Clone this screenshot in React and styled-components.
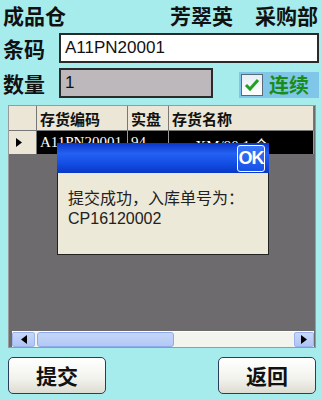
import React from 'react';
import styled, { createGlobalStyle } from 'styled-components';

const Global = createGlobalStyle`
  html, body { margin: 0; padding: 0; }
  body {
    background: #a6ecec;
    font-family: "Noto Sans CJK SC", "Liberation Sans", sans-serif;
  }
`;

const Screen = styled.div`
  position: relative;
  width: 322px;
  height: 400px;
  background: #a6ecec;
  overflow: hidden;
  display: flex;
  flex-direction: column;
`;

const TitleRow = styled.div`
  display: flex;
  align-items: center;
  height: 30px;
  padding: 0 4px 0 3px;
  font-size: 21px;
  font-weight: bold;
  color: #111;
  line-height: 1;
`;

const Spacer = styled.div`
  flex: 1;
`;

const Gap = styled.span`
  display: inline-block;
  width: 22px;
`;

const FieldRow = styled.div`
  display: flex;
  align-items: center;
  height: 30px;
  margin-top: ${p => p.$top}px;
  padding-left: 3px;
`;

const Label = styled.div`
  width: 56px;
  font-size: 21px;
  font-weight: bold;
  color: #111;
  line-height: 1;
`;

const Input = styled.div`
  box-sizing: border-box;
  width: ${p => p.$w}px;
  height: 30px;
  border: 2px solid #2a2a2a;
  background: ${p => p.$bg};
  font-family: "Liberation Sans", sans-serif;
  font-size: 17px;
  padding-left: 4px;
  display: flex;
  align-items: center;
  color: #111;
`;

const CheckArea = styled.div`
  margin-left: 26px;
  width: 80px;
  height: 26px;
  margin-top: 4px;
  background: #80c6e8;
  display: flex;
  align-items: center;
  gap: 6px;
`;

const Box = styled.div`
  box-sizing: border-box;
  width: 22px;
  height: 22px;
  border: 1px solid #5a6a7a;
  background: linear-gradient(#e6eef4, #ffffff);
  display: flex;
  align-items: center;
  justify-content: center;
  margin-left: 2px;
`;

const CheckText = styled.span`
  font-size: 20px;
  font-weight: bold;
  color: #1a8c1a;
  line-height: 1;
`;

const GridWrap = styled.div`
  box-sizing: border-box;
  margin: 7px 6px 0 8px;
  height: 243px;
  background: #6d6b6e;
  border: 1px solid #9a9a9a;
  display: flex;
  flex-direction: column;
`;

const Row = styled.div`
  display: grid;
  grid-template-columns: 28px 91px 41px 145px;
  height: ${p => p.$h}px;
`;

const HeadCell = styled.div`
  box-sizing: border-box;
  background: #ece6d6;
  border-right: 1px solid #777;
  border-bottom: 1px solid #777;
  font-size: 15px;
  font-weight: bold;
  color: #111;
  display: flex;
  align-items: center;
  padding-left: 3px;
  white-space: nowrap;
  overflow: hidden;
`;

const RowHead = styled.div`
  box-sizing: border-box;
  background: #ece6d6;
  border-right: 1px solid #777;
  display: flex;
  align-items: center;
  padding-left: 7px;
`;

const DataCell = styled.div`
  box-sizing: border-box;
  background: #000;
  color: #fff;
  font-family: "Liberation Serif", "Noto Sans CJK SC", serif;
  font-size: 15px;
  padding: 3px 0 0 3px;
  border-right: 1px solid #999;
  white-space: nowrap;
  overflow: hidden;
`;

const Fill = styled.div`
  flex: 1;
`;

const ScrollBar = styled.div`
  height: 15px;
  margin: 0 1px 0 3px;
  display: flex;
  align-items: stretch;
  background: #f4f4ee;
  border-top: 1px solid #fff;
`;

const ArrowBtn = styled.div`
  width: ${p => p.$w}px;
  background: linear-gradient(#c8d8fa, #aec4f4);
  border: 1px solid #9cb4ee;
  border-radius: 2px;
  box-sizing: border-box;
  display: flex;
  align-items: center;
  justify-content: center;
`;

const Thumb = styled.div`
  width: 137px;
  margin-left: 2px;
  box-sizing: border-box;
  background: linear-gradient(#c6d6fa, #b2c8f6);
  border: 1px solid #8eaaea;
  border-radius: 3px;
`;

const Track = styled.div`
  flex: 1;
`;

const ButtonRow = styled.div`
  display: flex;
  justify-content: space-between;
  padding: 9px 6px 0 8px;
`;

const Button = styled.button`
  box-sizing: border-box;
  width: 98px;
  height: 37px;
  border: 1px solid #2c3c5c;
  border-radius: 5px;
  background: linear-gradient(#ffffff, #f2f2ec 60%, #dcdcd2);
  font-family: "Noto Sans CJK SC", sans-serif;
  font-size: 21px;
  font-weight: bold;
  color: #111;
  padding: 0;
  line-height: 1;
`;

const Dialog = styled.div`
  position: absolute;
  left: 57px;
  top: 143px;
  width: 212px;
  height: 112px;
  display: flex;
  flex-direction: column;
`;

const DialogTitle = styled.div`
  height: 30px;
  background: linear-gradient(#0a36c8, #2461f2 35%, #1450e6 65%, #0838c4);
  display: flex;
  justify-content: flex-end;
  align-items: center;
  padding-right: 4px;
`;

const OkBtn = styled.div`
  box-sizing: border-box;
  width: 28px;
  height: 27px;
  border: 1px solid #fff;
  border-radius: 3px;
  background: linear-gradient(#3a78f8, #1650e8);
  color: #fff;
  font-family: "Liberation Sans", sans-serif;
  font-weight: bold;
  font-size: 18px;
  display: flex;
  align-items: center;
  justify-content: center;
  letter-spacing: -1px;
`;

const DialogBody = styled.div`
  flex: 1;
  background: #ece9d8;
  border: 1px solid #222;
  border-top: none;
  padding: 13px 0 0 10px;
  font-size: 16px;
  line-height: 22px;
  color: #222;
`;

const Mono = styled.div`
  font-family: "Liberation Sans", sans-serif;
`;

const Tri = ({ dir }) => (
  <svg width="6" height="9" viewBox="0 0 6 9">
    {dir === 'left'
      ? <polygon points="6,0 6,9 0,4.5" fill="#000" />
      : <polygon points="0,0 0,9 6,4.5" fill="#000" />}
  </svg>
);

export default function App() {
  return (
    <Screen>
      <Global />
      <TitleRow>
        成品仓
        <Spacer />
        芳翠英<Gap />采购部
      </TitleRow>
      <FieldRow $top={3}>
        <Label>条码</Label>
        <Input $w={260} $bg="#ffffff">A11PN20001</Input>
      </FieldRow>
      <FieldRow $top={5}>
        <Label>数量</Label>
        <Input $w={154} $bg="#bdb8bb">1</Input>
        <CheckArea>
          <Box>
            <svg width="16" height="14" viewBox="0 0 16 14">
              <path d="M2 7 L6 11 L14 2" stroke="#22a022" strokeWidth="3" fill="none" />
            </svg>
          </Box>
          <CheckText>连续</CheckText>
        </CheckArea>
      </FieldRow>
      <GridWrap>
        <Row $h={25}>
          <HeadCell />
          <HeadCell>存货编码</HeadCell>
          <HeadCell>实盘</HeadCell>
          <HeadCell>存货名称</HeadCell>
        </Row>
        <Row $h={23}>
          <RowHead><Tri dir="right" /></RowHead>
          <DataCell>A11PN20001</DataCell>
          <DataCell>94</DataCell>
          <DataCell>mmXM/90 1 个</DataCell>
        </Row>
        <Fill />
        <ScrollBar>
          <ArrowBtn $w={23}><Tri dir="left" /></ArrowBtn>
          <Thumb />
          <Track />
          <ArrowBtn $w={20}><Tri dir="right" /></ArrowBtn>
        </ScrollBar>
      </GridWrap>
      <ButtonRow>
        <Button>提交</Button>
        <Button>返回</Button>
      </ButtonRow>
      <Dialog>
        <DialogTitle>
          <OkBtn>OK</OkBtn>
        </DialogTitle>
        <DialogBody>
          提交成功，入库单号为：
          <Mono>CP16120002</Mono>
        </DialogBody>
      </Dialog>
    </Screen>
  );
}
